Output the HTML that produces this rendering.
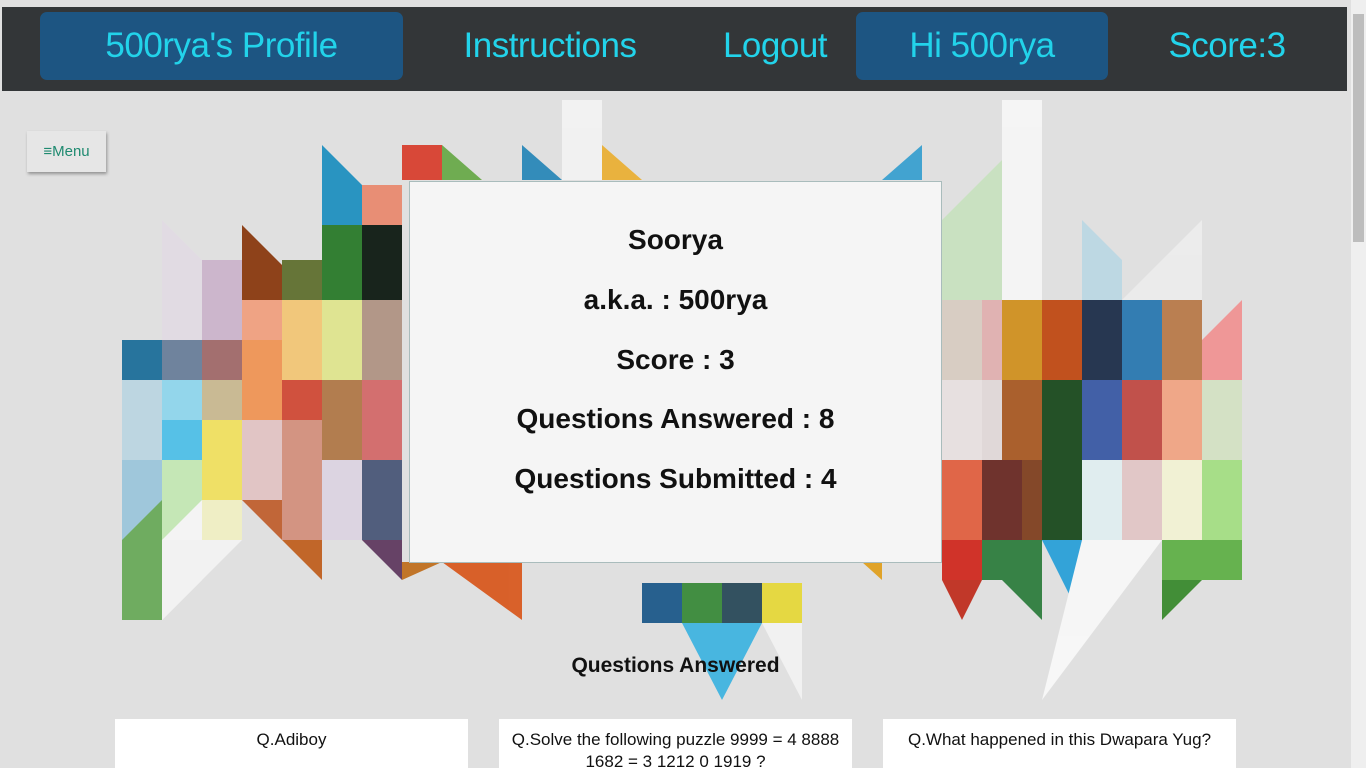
<!DOCTYPE html>
<html><head><meta charset="utf-8"><style>
*{margin:0;padding:0;box-sizing:border-box}
html,body{width:1366px;height:768px;overflow:hidden}
body{background:#e0e0e0;font-family:"Liberation Sans",sans-serif;position:relative}
#art{position:absolute;left:0;top:0}
.nav{position:absolute;left:2px;top:7px;width:1345px;height:84px;background:#333638}
.nav div{position:absolute;top:5px;height:68px;line-height:68px;color:#22d3ea;font-size:35px;text-align:center;letter-spacing:-0.5px}
.pill{background:#1d5582;border-radius:7px}
.menu{position:absolute;left:27px;top:131px;width:79px;height:41px;background:#e6e6e6;box-shadow:1px 2px 3px rgba(0,0,0,.35);color:#1f8a70;font-size:15px;line-height:41px;text-align:center}
.card{position:absolute;left:409px;top:181px;width:533px;height:382px;background:#f5f5f5;border:1px solid #a9bcbc}
.card p{position:absolute;left:0;width:100%;text-align:center;font-size:28px;color:#111;font-weight:bold}
h2{position:absolute;left:0;width:1351px;top:654px;text-align:center;font-size:21px;font-weight:bold;color:#111}
.q{position:absolute;top:719px;width:353px;height:60px;background:#fff;text-align:center;font-size:17px;color:#111;padding-top:10px;line-height:22px}
.sb{position:absolute;left:1351px;top:0;width:15px;height:768px;background:#efefef}
.th{position:absolute;left:1353px;top:14px;width:11px;height:228px;background:#bdbdbd}
</style></head><body>
<svg id="art" width="1366" height="768">
<g opacity="0.95">
<!-- left cluster -->
<rect x="122" y="340" width="40" height="40" fill="#1e6f9a"/>
<rect x="122" y="380" width="40" height="80" fill="#bcd6e2"/>
<rect x="122" y="460" width="40" height="80" fill="#9cc6db"/>
<polygon points="122,540 162,500 162,620 122,620" fill="#6aaa5a"/>
<polygon points="162,220 202,260 202,340 162,340" fill="#e2dbe4"/>
<rect x="162" y="340" width="40" height="40" fill="#6a7f9a"/>
<rect x="162" y="380" width="40" height="40" fill="#8fd6ec"/>
<rect x="162" y="420" width="40" height="40" fill="#4fc0e8"/>
<rect x="162" y="460" width="40" height="80" fill="#c4e8b4"/>
<polygon points="162,540 202,500 202,580 162,620" fill="#f6f6f6"/>
<rect x="202" y="260" width="40" height="80" fill="#cbb4cb"/>
<rect x="202" y="340" width="40" height="40" fill="#a06a6a"/>
<rect x="202" y="380" width="40" height="40" fill="#c8b890"/>
<rect x="202" y="420" width="40" height="80" fill="#f0e060"/>
<rect x="202" y="500" width="40" height="40" fill="#f0efc4"/>
<polygon points="242,225 282,265 282,300 242,300" fill="#8a3a10"/>
<rect x="242" y="300" width="40" height="40" fill="#f0a080"/>
<rect x="242" y="340" width="40" height="80" fill="#ef9555"/>
<rect x="242" y="420" width="40" height="80" fill="#e2c4c4"/>
<polygon points="242,500 282,500 282,540" fill="#c06030"/>
<rect x="282" y="260" width="40" height="40" fill="#607030"/>
<rect x="282" y="300" width="40" height="80" fill="#f2c676"/>
<rect x="282" y="380" width="40" height="40" fill="#d04a36"/>
<rect x="282" y="420" width="40" height="120" fill="#d3907e"/>
<polygon points="282,540 322,540 322,580" fill="#c06020"/>
<polygon points="322,145 362,185 362,225 322,225" fill="#2090c0"/>
<rect x="322" y="225" width="40" height="75" fill="#2a7a2a"/>
<rect x="322" y="300" width="40" height="80" fill="#dfe58e"/>
<rect x="322" y="380" width="40" height="80" fill="#b07848"/>
<rect x="322" y="460" width="40" height="80" fill="#dcd4e2"/>
<rect x="362" y="185" width="40" height="40" fill="#e98a70"/>
<rect x="362" y="225" width="40" height="75" fill="#0e1a12"/>
<rect x="362" y="300" width="40" height="80" fill="#b09484"/>
<rect x="362" y="380" width="40" height="80" fill="#d36a6a"/>
<rect x="362" y="460" width="40" height="80" fill="#4a5878"/>
<polygon points="362,540 402,540 402,580" fill="#603a60"/>
<polygon points="162,540 162,620 242,540" fill="#f4f4f4"/>
<!-- top middle -->
<polygon points="402,145 442,145 442,180 402,180" fill="#d84030"/>
<polygon points="442,145 482,180 442,180" fill="#6aaa4a"/>
<polygon points="522,145 562,180 522,180" fill="#2a88b8"/>
<polygon points="602,145 642,180 602,180" fill="#eab036"/>
<polygon points="922,145 922,180 882,180" fill="#3aa0d0"/>
<polygon points="562,100 602,100 602,180 562,180" fill="#f2f2f2"/>
<!-- bottom left under card -->
<polygon points="442,562 522,562 522,620" fill="#d85a20"/>
<polygon points="402,562 442,562 402,580" fill="#c07020"/>
<polygon points="862,562 882,562 882,580" fill="#e0a020"/>
<!-- middle bottom -->
<rect x="642" y="583" width="40" height="40" fill="#1e5a8a"/>
<rect x="682" y="583" width="40" height="40" fill="#3a8a3a"/>
<rect x="722" y="583" width="40" height="40" fill="#2a4a5a"/>
<rect x="762" y="583" width="40" height="40" fill="#e6d83a"/>
<polygon points="682,623 762,623 722,700" fill="#40b4e0"/>
<polygon points="762,623 802,623 802,700" fill="#f2f2f2"/>
<!-- right cluster upper -->
<polygon points="942,220 1002,160 1002,300 942,300" fill="#c8e2c0"/>
<polygon points="1002,100 1042,100 1042,300 1002,300" fill="#f6f6f6"/>
<polygon points="1082,220 1122,260 1122,300 1082,300" fill="#bcd8e4"/>
<polygon points="1122,300 1202,220 1202,300" fill="#ececec"/>
<!-- right lower band -->
<rect x="942" y="300" width="40" height="80" fill="#d8ccc2"/>
<rect x="942" y="380" width="40" height="80" fill="#e8e0e0"/>
<rect x="942" y="460" width="40" height="80" fill="#e06040"/>
<rect x="982" y="300" width="20" height="80" fill="#e0b0b0"/>
<rect x="982" y="380" width="20" height="80" fill="#e0d8d8"/>
<rect x="982" y="460" width="40" height="80" fill="#6a2a24"/>
<rect x="1002" y="300" width="40" height="80" fill="#d09020"/>
<rect x="1002" y="380" width="40" height="80" fill="#a85a24"/>
<rect x="1022" y="460" width="20" height="80" fill="#804020"/>
<rect x="1042" y="300" width="40" height="80" fill="#c04a14"/>
<rect x="1042" y="380" width="40" height="160" fill="#1a4a1e"/>
<rect x="1082" y="300" width="40" height="80" fill="#1e2e4a"/>
<rect x="1082" y="380" width="40" height="80" fill="#3a5aa4"/>
<rect x="1082" y="460" width="40" height="80" fill="#e0eef0"/>
<rect x="1122" y="300" width="40" height="80" fill="#2a78b0"/>
<rect x="1122" y="380" width="40" height="80" fill="#c04a44"/>
<rect x="1122" y="460" width="40" height="80" fill="#e2c6c6"/>
<rect x="1162" y="300" width="40" height="80" fill="#b87a4a"/>
<rect x="1162" y="380" width="40" height="80" fill="#f0a484"/>
<rect x="1162" y="460" width="40" height="80" fill="#f2f2d4"/>
<polygon points="1202,340 1242,300 1242,380 1202,380" fill="#f09494"/>
<rect x="1202" y="380" width="40" height="80" fill="#d4e2c4"/>
<rect x="1202" y="460" width="40" height="80" fill="#a4de84"/>
<rect x="942" y="540" width="40" height="40" fill="#d02a20"/>
<polygon points="942,580 982,580 962,620" fill="#c03020"/>
<rect x="982" y="540" width="60" height="40" fill="#2e7e3e"/>
<polygon points="1002,580 1042,580 1042,620" fill="#2e7e3e"/>
<polygon points="1042,540 1082,540 1082,620" fill="#2aa0d8"/>
<polygon points="1082,540 1162,540 1042,700" fill="#f8f8f8"/>
<rect x="1162" y="540" width="80" height="40" fill="#60b048"/>
<polygon points="1162,580 1202,580 1162,620" fill="#3a8a2e"/>
</g>
</svg>
<div class="nav">
<div class="pill" style="left:38px;width:363px">500rya's Profile</div>
<div style="left:440px;width:216px">Instructions</div>
<div style="left:700px;width:146px">Logout</div>
<div class="pill" style="left:854px;width:252px">Hi 500rya</div>
<div style="left:1140px;width:170px">Score:3</div>
</div>
<div class="menu">≡Menu</div>
<div class="card">
<p style="top:42px">Soorya</p>
<p style="top:102px">a.k.a. : 500rya</p>
<p style="top:162px">Score : 3</p>
<p style="top:221px">Questions Answered : 8</p>
<p style="top:281px">Questions Submitted : 4</p>
</div>
<h2>Questions Answered</h2>
<div class="q" style="left:115px">Q.Adiboy</div>
<div class="q" style="left:499px">Q.Solve the following puzzle 9999 = 4 8888<br>1682 = 3 1212 0 1919 ?</div>
<div class="q" style="left:883px">Q.What happened in this Dwapara Yug?</div>
<div class="sb"></div><div class="th"></div>
</body></html>
